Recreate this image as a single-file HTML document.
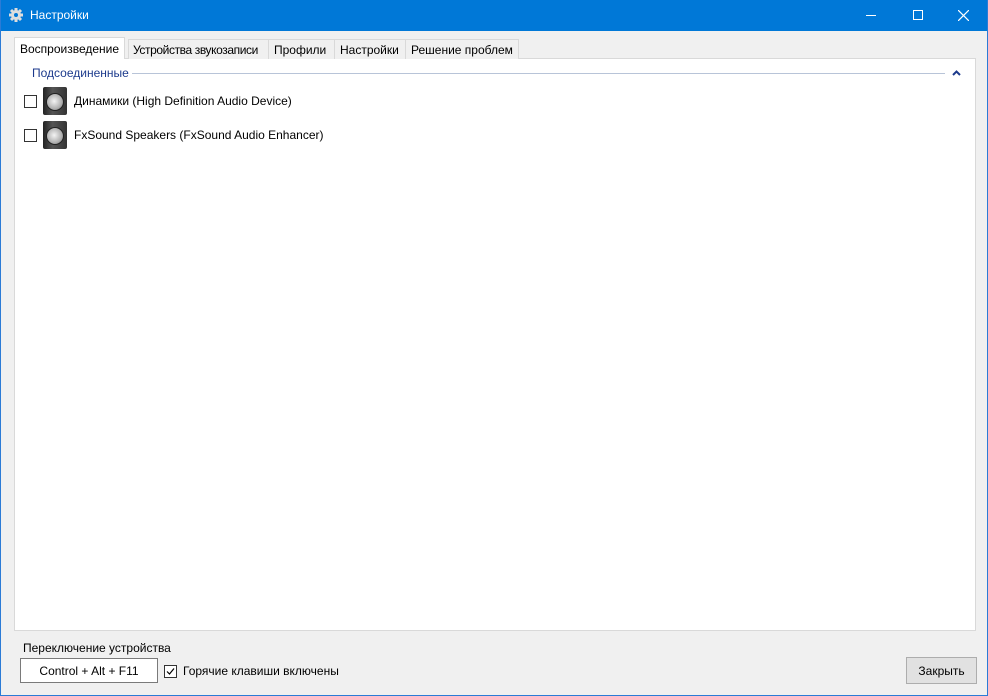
<!DOCTYPE html>
<html><head><meta charset="utf-8"><style>
*{margin:0;padding:0;box-sizing:border-box}
body{width:988px;height:696px;background:#f0f0f0;font-family:"Segoe UI","Liberation Sans","DejaVu Sans",sans-serif;font-size:12px;color:#000;position:relative;overflow:hidden}
.win{position:absolute;left:0;top:0;width:988px;height:696px;border:1px solid #2b7bd6;border-top:none}
.title{position:absolute;left:0;top:0;width:988px;height:31px;background:#0078d7;color:#fff}
.title .t{position:absolute;left:30px;top:8px;font-size:12px}
.abs{position:absolute}
.tab{position:absolute;top:39px;height:20px;border:1px solid #d9d9d9;border-bottom:none;background:#f0f0f0;padding:3px 5px 0;white-space:nowrap;font-size:12px;overflow:hidden}
.tab.sel{top:37px;height:22px;background:#fff;border-color:#d9d9d9;padding-top:4px}
.panel{position:absolute;left:14px;top:58px;width:962px;height:573px;background:#fff;border:1px solid #d9d9d9}
.cb{position:absolute;width:13px;height:13px;border:1px solid #333;background:#fff}
.spk{position:absolute;width:24px;height:28px;background:linear-gradient(90deg,#222,#555 40%,#333);border-radius:2px}
.spk i{position:absolute;left:3px;top:6px;width:18px;height:18px;border-radius:50%;background:radial-gradient(circle at 45% 45%,#f4f4f4,#b0b0b0 60%,#666);border:1px solid #222}
</style></head><body>
<div class="title">
<svg class="abs" style="left:8px;top:7px" width="16" height="16" viewBox="0 0 16 16"><g fill="#ddd"><circle cx="8" cy="8" r="5"/><g stroke="#ddd" stroke-width="3"><line x1="8" y1="1" x2="8" y2="15"/><line x1="1" y1="8" x2="15" y2="8"/><line x1="3" y1="3" x2="13" y2="13"/><line x1="13" y1="3" x2="3" y2="13"/></g></g><circle cx="8" cy="8" r="2" fill="#0078d7"/></svg>
<div class="t">Настройки</div>
<div class="abs" style="left:866px;top:15px;width:10px;height:1px;background:#fff"></div>
<div class="abs" style="left:913px;top:10px;width:10px;height:10px;border:1px solid #fff"></div>
<svg class="abs" style="left:958px;top:10px" width="11" height="11"><path d="M0 0L11 11M11 0L0 11" stroke="#fff" stroke-width="1.2"/></svg>
</div>
<div class="win"></div>
<div class="panel"></div>
<div class="tab" style="left:128px;width:141px;letter-spacing:-0.4px;padding-left:4px">Устройства звукозаписи</div>
<div class="tab" style="left:268px;width:67px">Профили</div>
<div class="tab" style="left:334px;width:72px">Настройки</div>
<div class="tab" style="left:405px;width:114px">Решение проблем</div>
<div class="tab sel" style="left:14px;width:111px">Воспроизведение</div>
<div class="abs" style="left:32px;top:66px;color:#1c3a8c">Подсоединенные</div>
<div class="abs" style="left:132px;top:73px;width:813px;height:1px;background:#b8c4d8"></div>
<svg class="abs" style="left:952px;top:70px" width="9" height="6"><path d="M1 5L4.5 1.5L8 5" stroke="#1c3a8c" stroke-width="2" fill="none"/></svg>
<div class="cb" style="left:24px;top:95px"></div>
<div class="spk" style="left:43px;top:87px"><i></i></div>
<div class="abs" style="left:74px;top:94px">Динамики (High Definition Audio Device)</div>
<div class="cb" style="left:24px;top:129px"></div>
<div class="spk" style="left:43px;top:121px"><i></i></div>
<div class="abs" style="left:74px;top:128px">FxSound Speakers (FxSound Audio Enhancer)</div>
<div class="abs" style="left:23px;top:641px">Переключение устройства</div>
<div class="abs" style="left:20px;top:658px;width:138px;height:25px;background:#fff;border:1px solid #7a7a7a;text-align:center;padding-top:5px">Control + Alt + F11</div>
<div class="cb" style="left:164px;top:665px"></div>
<svg class="abs" style="left:165px;top:666px" width="11" height="11"><path d="M2 5.5L4.5 8L9 2.5" stroke="#000" stroke-width="1.2" fill="none"/></svg>
<div class="abs" style="left:183px;top:664px">Горячие клавиши включены</div>
<div class="abs" style="left:906px;top:657px;width:71px;height:27px;background:#e1e1e1;border:1px solid #adadad;text-align:center;padding-top:6px">Закрыть</div>
</body></html>
